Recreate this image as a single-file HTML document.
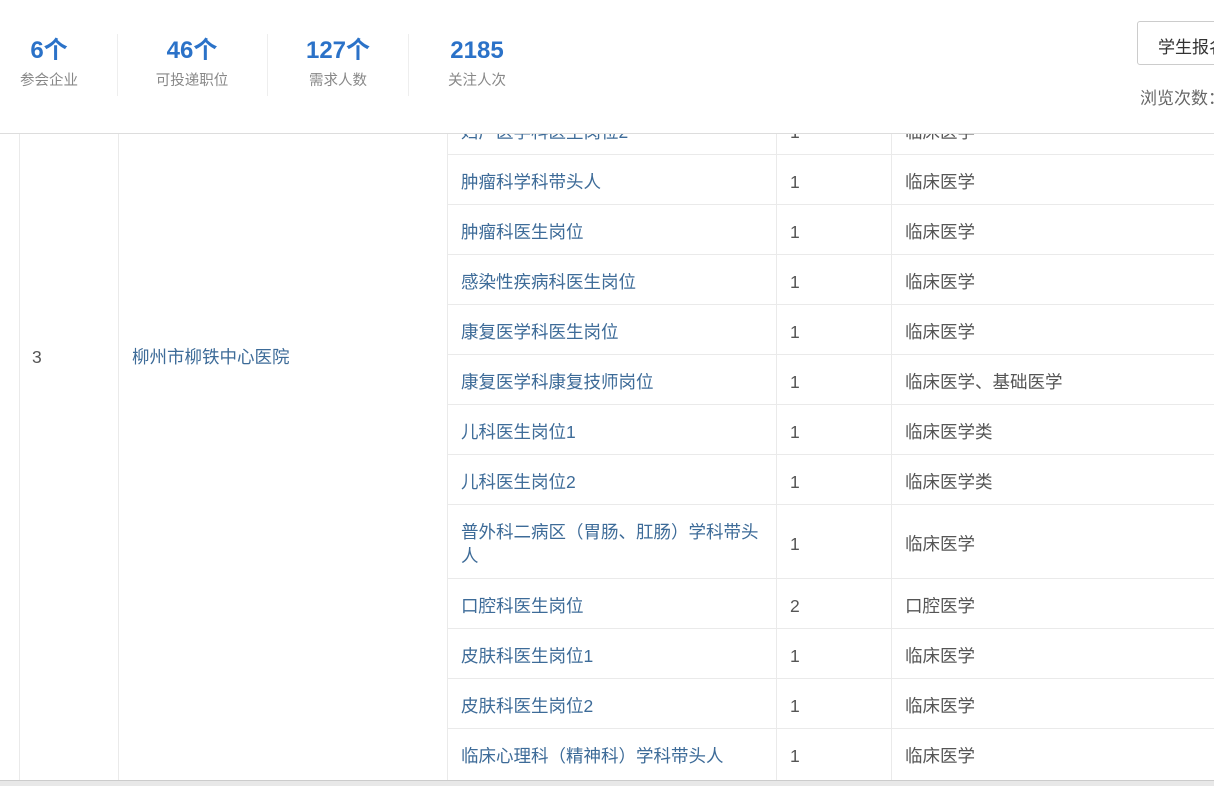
<!DOCTYPE html>
<html><head><meta charset="utf-8"><style>
*{margin:0;padding:0;box-sizing:border-box}
body{width:1214px;height:786px;overflow:hidden;background:#fff;position:relative;font-family:"Liberation Sans","Noto Sans CJK SC",sans-serif}
.hdr{position:absolute;left:0;top:0;width:1214px;height:134px;background:#fff;border-bottom:1px solid #ddd;z-index:5}
.st{position:absolute;top:36px;text-align:center}
.st b{display:block;font-size:24px;color:#2b72c8;line-height:30px}
.st span{display:block;font-size:14.5px;color:#888;margin-top:3px}
.sep{position:absolute;top:34px;width:1px;height:62px;background:#eee}
.btn{position:absolute;left:1137px;top:21px;width:100px;height:44px;border:1px solid #ccc;border-radius:3px;font-size:17px;color:#333;padding:11px 0 0 20px}
.view{position:absolute;left:1140px;top:84px;font-size:17px;color:#666;white-space:nowrap}
.vl{position:absolute;top:0;width:1px;height:781px;background:#eaeaea}
.hl{position:absolute;left:447px;width:767px;height:1px;background:#eaeaea}
.t{position:absolute;font-size:17.5px;line-height:24px;white-space:nowrap;margin-top:2px}
.a{color:#3d6b98}.g{color:#555}
.bot{position:absolute;left:0;top:780px;width:1214px;height:6px;background:#e8e8e8;border-top:1px solid #ccc}
</style></head><body>
<div class="hdr">
<div class="st" style="left:19px;width:60px"><b>6个</b><span>参会企业</span></div>
<div class="sep" style="left:117px"></div>
<div class="st" style="left:142px;width:100px"><b>46个</b><span>可投递职位</span></div>
<div class="sep" style="left:267px"></div>
<div class="st" style="left:300px;width:76px"><b>127个</b><span>需求人数</span></div>
<div class="sep" style="left:408px"></div>
<div class="st" style="left:446px;width:62px"><b>2185</b><span>关注人次</span></div>
<div class="btn">学生报名</div>
<div class="view">浏览次数：</div>
</div>
<div class="vl" style="left:19px"></div>
<div class="vl" style="left:118px"></div>
<div class="vl" style="left:447px"></div>
<div class="vl" style="left:776px"></div>
<div class="vl" style="left:891px"></div>
<div class="hl" style="top:154px"></div><div class="hl" style="top:204px"></div><div class="hl" style="top:254px"></div><div class="hl" style="top:304px"></div><div class="hl" style="top:354px"></div><div class="hl" style="top:404px"></div><div class="hl" style="top:454px"></div><div class="hl" style="top:504px"></div><div class="hl" style="top:578px"></div><div class="hl" style="top:628px"></div><div class="hl" style="top:678px"></div><div class="hl" style="top:728px"></div>
<div class="t g" style="left:32px;top:343px">3</div>
<div class="t a" style="left:132px;top:343px">柳州市柳铁中心医院</div>
<div class="t a" style="left:461px;top:168px">肿瘤科学科带头人</div><div class="t g" style="left:790px;top:168px">1</div><div class="t g" style="left:905px;top:168px">临床医学</div>
<div class="t a" style="left:461px;top:218px">肿瘤科医生岗位</div><div class="t g" style="left:790px;top:218px">1</div><div class="t g" style="left:905px;top:218px">临床医学</div>
<div class="t a" style="left:461px;top:268px">感染性疾病科医生岗位</div><div class="t g" style="left:790px;top:268px">1</div><div class="t g" style="left:905px;top:268px">临床医学</div>
<div class="t a" style="left:461px;top:318px">康复医学科医生岗位</div><div class="t g" style="left:790px;top:318px">1</div><div class="t g" style="left:905px;top:318px">临床医学</div>
<div class="t a" style="left:461px;top:368px">康复医学科康复技师岗位</div><div class="t g" style="left:790px;top:368px">1</div><div class="t g" style="left:905px;top:368px">临床医学、基础医学</div>
<div class="t a" style="left:461px;top:418px">儿科医生岗位1</div><div class="t g" style="left:790px;top:418px">1</div><div class="t g" style="left:905px;top:418px">临床医学类</div>
<div class="t a" style="left:461px;top:468px">儿科医生岗位2</div><div class="t g" style="left:790px;top:468px">1</div><div class="t g" style="left:905px;top:468px">临床医学类</div>
<div class="t a" style="left:461px;top:518px">普外科二病区（胃肠、肛肠）学科带头</div><div class="t a" style="left:461px;top:542px">人</div><div class="t g" style="left:790px;top:530px">1</div><div class="t g" style="left:905px;top:530px">临床医学</div>
<div class="t a" style="left:461px;top:592px">口腔科医生岗位</div><div class="t g" style="left:790px;top:592px">2</div><div class="t g" style="left:905px;top:592px">口腔医学</div>
<div class="t a" style="left:461px;top:642px">皮肤科医生岗位1</div><div class="t g" style="left:790px;top:642px">1</div><div class="t g" style="left:905px;top:642px">临床医学</div>
<div class="t a" style="left:461px;top:692px">皮肤科医生岗位2</div><div class="t g" style="left:790px;top:692px">1</div><div class="t g" style="left:905px;top:692px">临床医学</div>
<div class="t a" style="left:461px;top:742px">临床心理科（精神科）学科带头人</div><div class="t g" style="left:790px;top:742px">1</div><div class="t g" style="left:905px;top:742px">临床医学</div>
<div class="t a" style="left:461px;top:118px">妇产医学科医生岗位2</div><div class="t g" style="left:790px;top:118px">1</div><div class="t g" style="left:905px;top:118px">临床医学</div>
<div class="bot"></div>
</body></html>
